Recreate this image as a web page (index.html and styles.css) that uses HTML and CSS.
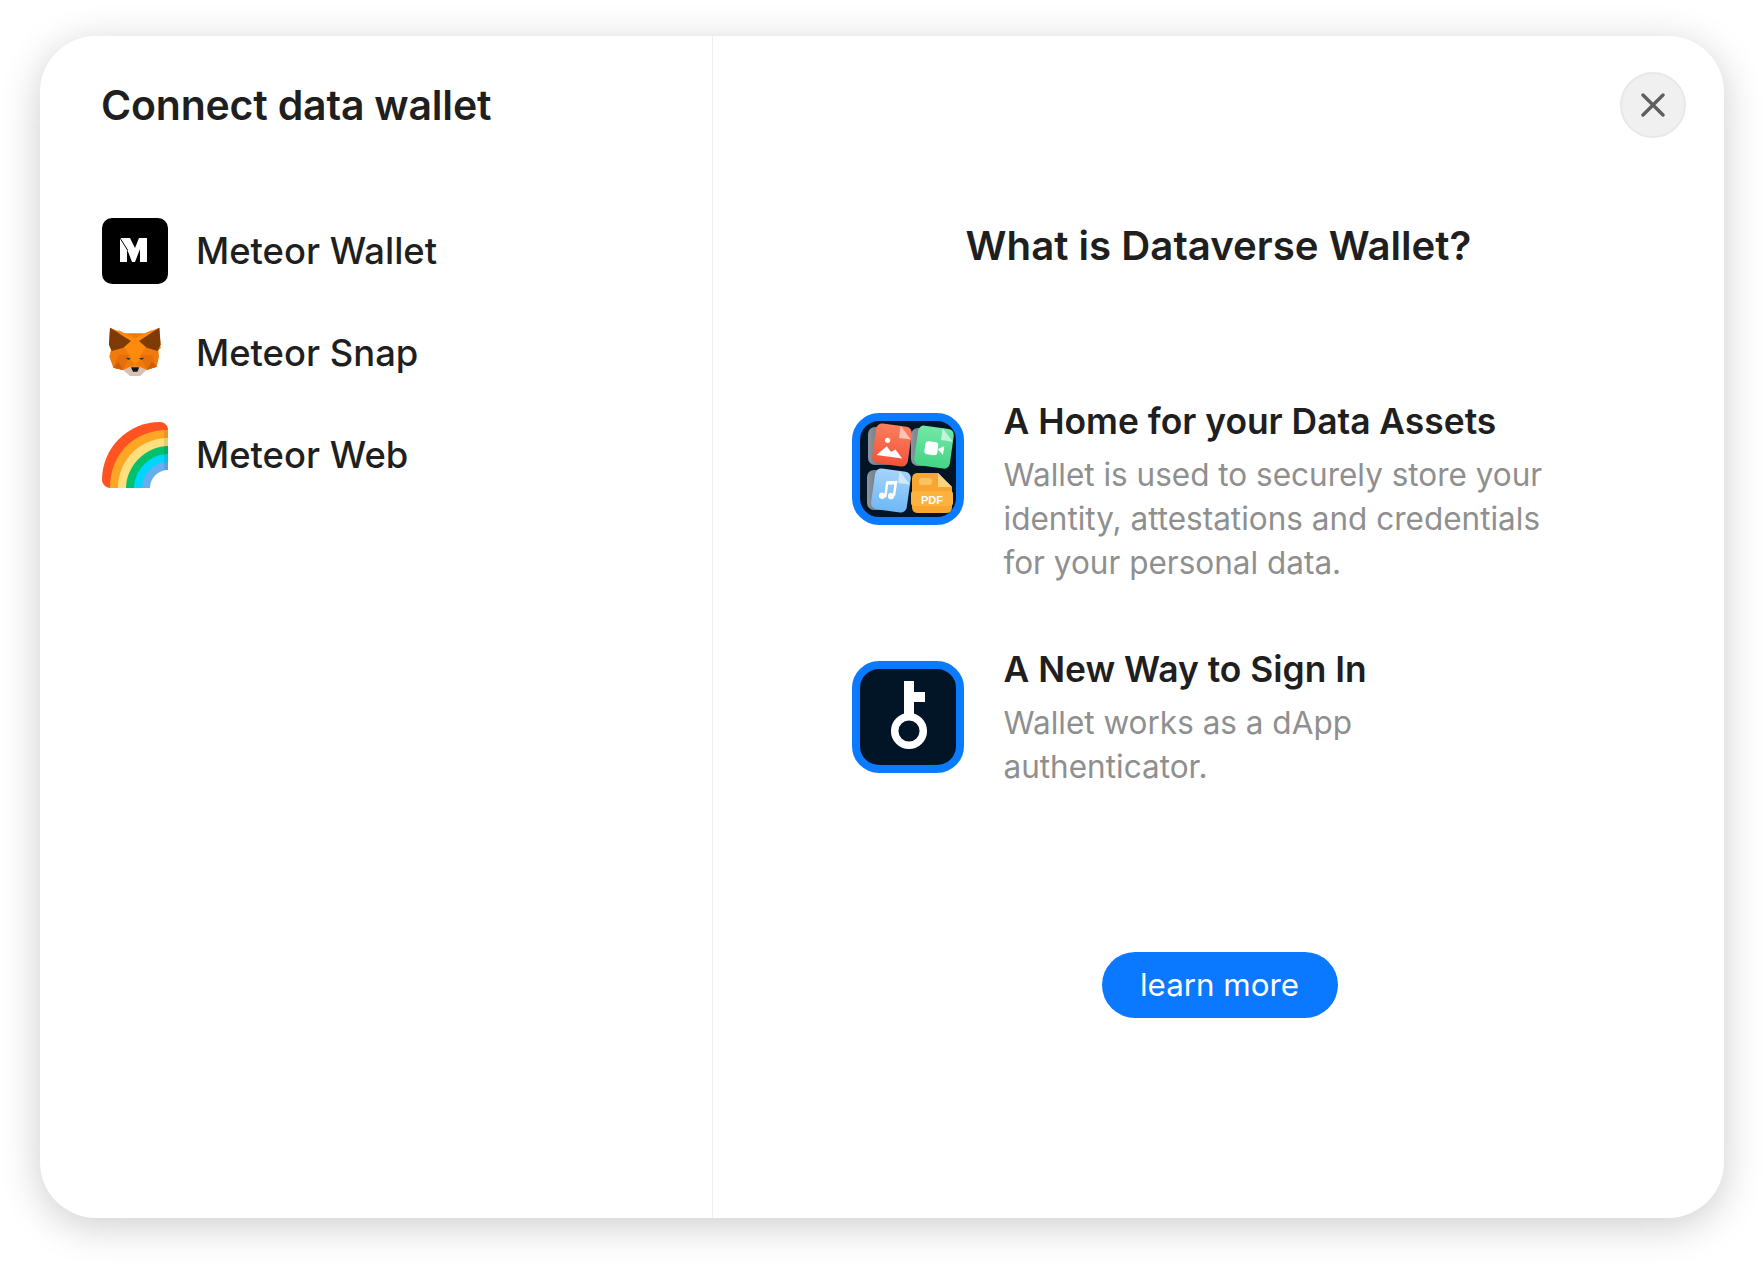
FILE: index.html
```html
<!DOCTYPE html>
<html lang="en">
<head>
<meta charset="utf-8">
<title>Connect data wallet</title>
<link rel="stylesheet" href="styles.css">
</head>
<body>
<div class="modal">
  <section class="left">
    <h1 class="title">Connect data wallet</h1>
    <ul class="wallets">
      <li class="wallet">
        <svg class="wallet-icon" viewBox="0 0 66 66">
          <rect width="66" height="66" rx="10" fill="#000"/>
          <path d="M18 20h10l5 10 4-10h8v24h-7V31l-5 13h-3l-5-13v13h-7z" fill="#fff"/>
          <path d="M18 20l7.500 12" stroke="#000" stroke-width="1"/>
        </svg>
        <span>Meteor Wallet</span>
      </li>
      <li class="wallet">
        <svg class="wallet-icon" viewBox="0 0 66 66">
          <g transform="translate(-7 -5) scale(.3333)">
            <path d="M45 38l40 17h65l43-17 4 62-7 5 2 20-7 30-35 10-15 15h-30l-20-15-30-7-12-33 5-20-6-15z" fill="#f07a0a"/>
            <path d="M70 45l50 25 50-25-15 45-35 65-35-65z" fill="#ff8a0c"/>
            <path d="M45 38l63 40-23 20-35 10-8-20z" fill="#7f3b06"/>
            <path d="M193 38l-61 40 23 20 33 10 9-20z" fill="#7f3b06"/>
            <path d="M70 120h35l-20 45-30-7z" fill="#e5700b"/>
            <path d="M170 120h-35l20 45 30-10z" fill="#e5700b"/>
            <path d="M70 140l15 25-30-7zM170 140l-15 25 30-10z" fill="#cf5e0a"/>
            <path d="M85 165l20-10h30l20 10-20 18h-30z" fill="#d7c1b3"/>
            <path d="M108 157h25l-6 13h-13z" fill="#161616"/>
            <path d="M92 128l16 2-8 5zM148 128l-16 2 8 5z" fill="#233447"/>
          </g>
        </svg>
        <span>Meteor Snap</span>
      </li>
      <li class="wallet">
        <svg class="wallet-icon" viewBox="0 0 66 66">
          <path d="M0 58C0 26 26 0 58 0c4 0 8 3 8 8v58H8c-4 0-8-4-8-8z" fill="#ff5322"/>
          <path d="M8 66C8 32 32 8 66 8v58z" fill="#ffa725"/>
          <path d="M16 66C16 38 38 16 66 16v50z" fill="#ffdf7e"/>
          <path d="M24 66C24 44 44 24 66 24v42z" fill="#00c16c"/>
          <path d="M32 66C32 48 48 32 66 32v34z" fill="#00d5ff"/>
          <path d="M40 66C40 52 52 40 66 40v26z" fill="#67aeee"/>
          <path d="M48 66C48 56 56 48 66 48v18z" fill="#fff"/>
          <path d="M62 8h4v40h-4z" fill="#000" opacity=".09"/>
        </svg>
        <span>Meteor Web</span>
      </li>
    </ul>
  </section>
  <section class="right">
    <button class="close" aria-label="Close">
      <svg viewBox="0 0 24 24" class="close-icon"><path d="M2 2l20 20M22 2L2 22" stroke="#5f5f5f" stroke-width="3.400" stroke-linecap="round" fill="none"/></svg>
    </button>
    <h2 class="heading">What is Dataverse Wallet?</h2>
    <div class="features">
      <div class="feature">
        <svg class="feature-icon" viewBox="0 0 112 112">
          <defs>
            <linearGradient id="tile-red" x1="0" y1="0" x2="0" y2="1"><stop offset="0" stop-color="#fb7f5c"/><stop offset="1" stop-color="#f2533b"/></linearGradient>
            <linearGradient id="tile-green" x1="0" y1="0" x2="0" y2="1"><stop offset="0" stop-color="#74e6a8"/><stop offset="1" stop-color="#43d585"/></linearGradient>
            <linearGradient id="tile-blue" x1="0" y1="0" x2="0" y2="1"><stop offset="0" stop-color="#a4d4fa"/><stop offset="1" stop-color="#6fb8f6"/></linearGradient>
            <linearGradient id="tile-ghost" x1="0" y1="0" x2="1" y2="0"><stop offset="0" stop-color="#fff" stop-opacity=".55"/><stop offset="1" stop-color="#fff" stop-opacity=".2"/></linearGradient>
          </defs>
          <rect x="4" y="4" width="104" height="104" rx="23" fill="#021527" stroke="#0a7aff" stroke-width="8"/>
          <rect x="16" y="14" width="32" height="38" rx="7" fill="url(#tile-ghost)"/>
          <rect x="59" y="15" width="32" height="38" rx="7" fill="url(#tile-ghost)"/>
          <rect x="15" y="57" width="32" height="40" rx="7" fill="url(#tile-ghost)"/>
          <g transform="rotate(8 40 32)"><rect x="22" y="12" width="36" height="40" rx="6" fill="url(#tile-red)"/><path d="M46 12l12 12H46z" fill="#fbc4b5"/><path d="M26 44l9-10 5 5 4-3 8 8z" fill="#fff"/><circle cx="35" cy="28" r="2.600" fill="#fff"/></g>
          <g transform="rotate(8 81 34)"><rect x="64" y="14" width="36" height="40" rx="6" fill="url(#tile-green)"/><path d="M88 14l12 12H88z" fill="#c3f3d9"/><rect x="73" y="29" width="13" height="13" rx="3" fill="#fff"/><path d="M86 35.500l6-4v9z" fill="#fff"/></g>
          <g transform="rotate(8 39 77)"><rect x="21" y="57" width="36" height="41" rx="6" fill="url(#tile-blue)"/><path d="M45 57l12 12H45z" fill="#d0e9fc"/><path d="M33 69l11-2v15h-2.500v-11l-6 1v13H33z" fill="#fff"/><circle cx="31" cy="84" r="3.200" fill="#fff"/><circle cx="40" cy="83" r="3.200" fill="#fff"/></g>
          <path d="M66 60h20l14 14v20c0 4-2 6-6 6H66c-4 0-6-2-6-6V66c0-4 2-6 6-6z" fill="#f9a630"/>
          <path d="M86 60l14 14H86z" fill="#fcd37f"/>
          <rect x="67" y="65" width="13" height="7" rx="3" fill="#fbc265"/>
          <rect x="59" y="78" width="42" height="15" rx="3" fill="#fbb23f"/>
          <text x="80" y="90.500" class="pdf">PDF</text>
        </svg>
        <div class="feature-text">
          <h3 class="feature-title">A Home for your Data Assets</h3>
          <p class="feature-desc">Wallet is used to securely store your identity, attestations and credentials for your personal data.</p>
        </div>
      </div>
      <div class="feature">
        <svg class="feature-icon" viewBox="0 0 112 112">
          <rect x="4" y="4" width="104" height="104" rx="23" fill="#021527" stroke="#0a7aff" stroke-width="8"/>
          <path d="M52 20h10v11h11v10H62v16H52z" fill="#fff"/>
          <circle cx="57" cy="70" r="14.300" fill="#021527" stroke="#fff" stroke-width="7.500"/>
        </svg>
        <div class="feature-text">
          <h3 class="feature-title">A New Way to Sign In</h3>
          <p class="feature-desc">Wallet works as a dApp authenticator.</p>
        </div>
      </div>
    </div>
    <a class="learn" href="#">learn more</a>
  </section>
</div>
</body>
</html>
```
FILE: styles.css
```css
* { box-sizing: border-box; }
html, body { margin: 0; height: 100%; background: #fff; }
body {
  padding: 36px 40px 50px;
  font-family: Inter, "Noto Sans", sans-serif;
  color: #1f1f1f;
}
.modal {
  display: flex;
  height: 1182px;
  background: #fff;
  border-radius: 56px;
  box-shadow: 0 8px 40px rgba(0, 0, 0, .2);
  overflow: hidden;
}
.left {
  width: 673px;
  flex: none;
  padding: 45px 61px;
  border-right: 1px solid #eeeeee;
}
.title {
  margin: 0;
  font-size: 41px;
  line-height: 48px;
  font-weight: 600;
  letter-spacing: -0.2px;
}
.wallets {
  list-style: none;
  margin: 89px 0 0;
  padding: 0;
  display: flex;
  flex-direction: column;
  gap: 36px;
}
.wallet {
  display: flex;
  align-items: center;
  gap: 28px;
  height: 66px;
  font-size: 36.400px;
  font-weight: 500;
}
.wallet-icon { width: 66px; height: 66px; flex: none; margin-left: 1px; }
.right {
  flex: 1;
  position: relative;
  display: flex;
  flex-direction: column;
  align-items: center;
  padding-top: 186px;
}
.close {
  position: absolute;
  top: 36px;
  right: 38px;
  width: 66px;
  height: 66px;
  padding: 0;
  display: flex;
  align-items: center;
  justify-content: center;
  border-radius: 50%;
  border: 2px solid #e8e8e8;
  background: #f0f0f0;
}
.close-icon { width: 24px; height: 24px; }
.heading {
  margin: 0;
  font-size: 40.200px;
  line-height: 48px;
  font-weight: 600;
}
.features {
  margin-top: 130px;
  width: 734px;
  display: flex;
  flex-direction: column;
  gap: 63px;
}
.feature {
  display: flex;
  gap: 40px;
  align-items: flex-start;
}
.feature-icon { width: 112px; height: 112px; flex: none; margin-top: 13px; }
.feature-text { flex: 1; }
.feature-title {
  margin: 0;
  font-size: 35.400px;
  line-height: 44px;
  font-weight: 600;
}
.feature-desc {
  margin: 9px 0 0;
  max-width: 552px;
  font-size: 31.500px;
  line-height: 44px;
  font-weight: 400;
  color: #8f8f8f;
}
.pdf {
  font-family: "Liberation Sans", sans-serif;
  font-size: 11px;
  font-weight: 700;
  fill: #fff;
  text-anchor: middle;
}
.learn {
  margin: 163px 0 0 2px;
  width: 236px;
  height: 66px;
  border-radius: 33px;
  background: #0a78ff;
  color: #fff;
  display: flex;
  align-items: center;
  justify-content: center;
  font-size: 31.300px;
  text-decoration: none;
}
```
